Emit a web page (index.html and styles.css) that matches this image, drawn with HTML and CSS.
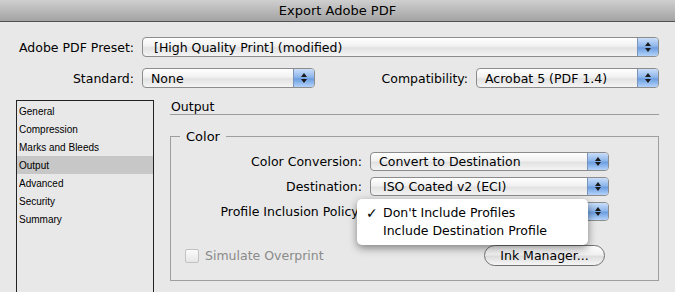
FILE: index.html
```html
<!DOCTYPE html>
<html lang="en">
<head>
  <meta charset="UTF-8" />
  <title>Export Adobe PDF</title>
  <link rel="stylesheet" href="styles.css">
</head>
<body>
  <div class="titlebar">Export Adobe PDF</div>
  <div class="dialog">
    <div class="row preset-row">
      <span class="label">Adobe PDF Preset:</span>
      <div class="popup wide"><span>[High Quality Print] (modified)</span><span class="arrows"></span></div>
    </div>
    <div class="row standard-row">
      <span class="label">Standard:</span>
      <div class="popup standard"><span>None</span><span class="arrows"></span></div>
      <span class="label compat-label">Compatibility:</span>
      <div class="popup compat"><span>Acrobat 5 (PDF 1.4)</span><span class="arrows"></span></div>
    </div>
    <div class="main">
      <ul class="sidebar">
        <li>General</li>
        <li>Compression</li>
        <li>Marks and Bleeds</li>
        <li class="selected">Output</li>
        <li>Advanced</li>
        <li>Security</li>
        <li>Summary</li>
      </ul>
      <div class="content">
        <div class="section-title">Output</div>
        <fieldset class="group">
          <legend>Color</legend>
          <div class="field">
            <span class="flabel">Color Conversion:</span>
            <div class="popup small"><span>Convert to Destination</span><span class="arrows"></span></div>
          </div>
          <div class="field">
            <span class="flabel">Destination:</span>
            <div class="popup small"><span>&nbsp;ISO Coated v2 (ECI)</span><span class="arrows"></span></div>
          </div>
          <div class="field">
            <span class="flabel">Profile Inclusion Policy:</span>
            <div class="popup small"><span></span><span class="arrows"></span></div>
            <div class="menu">
              <div class="menu-item"><span class="check">&#10003;</span>Don't Include Profiles</div>
              <div class="menu-item"><span class="check"></span>Include Destination Profile</div>
            </div>
          </div>
          <div class="bottom-row">
            <label class="checkbox"><span class="box"></span>Simulate Overprint</label>
            <button class="ink-btn">Ink Manager...</button>
          </div>
        </fieldset>
      </div>
    </div>
  </div>
</body>
</html>
```

FILE: styles.css
```css
body {
  margin: 0;
  background: #e8e8e8;
  font-family: "DejaVu Sans", sans-serif;
  font-size: 12.5px;
  color: #000;
  overflow: hidden;
}
.titlebar {
  height: 21px;
  line-height: 22px;
  text-align: center;
  font-size: 13px;
  background: linear-gradient(#cfcfcf, #a3a3a3);
  border-bottom: 1px solid #525252;
}
.dialog {
  padding: 15px 16px 0 0;
}
.row {
  display: flex;
  align-items: center;
  height: 20px;
}
.standard-row {
  margin-top: 11px;
}
.label {
  width: 142px;
  text-align: right;
  padding-right: 8px;
  box-sizing: border-box;
}
.compat-label {
  width: auto;
  margin-left: auto;
}
.popup {
  display: flex;
  align-items: center;
  justify-content: space-between;
  height: 20px;
  box-sizing: border-box;
  border: 1px solid #8c8c8c;
  border-radius: 4px;
  background: linear-gradient(#ffffff, #f1f1f1 45%, #e2e2e2 55%, #f4f4f4);
  padding-left: 8px;
  overflow: hidden;
  white-space: nowrap;
}
.popup.wide { width: 517px; padding-left: 11px; }
.popup.standard { width: 173px; }
.popup.compat { width: 183px; }
.arrows {
  width: 20px;
  flex: none;
  align-self: stretch;
  background: linear-gradient(#c9defa, #8fb6ea 45%, #6c9ee0 55%, #b4d3fb);
  border-left: 1px solid #7a93b8;
  position: relative;
}
.arrows::before,
.arrows::after {
  content: "";
  position: absolute;
  left: 7px;
  border-left: 3px solid transparent;
  border-right: 3px solid transparent;
}
.arrows::before {
  top: 4px;
  border-bottom: 4px solid #1a1a1a;
}
.arrows::after {
  bottom: 4px;
  border-top: 4px solid #1a1a1a;
}
.main {
  display: grid;
  grid-template-columns: 138px 1fr;
  column-gap: 16px;
  margin-top: 12px;
  padding-left: 16px;
}
.sidebar {
  list-style: none;
  margin: 0;
  padding: 1px 0 0;
  height: 200px;
  border: 1px solid #222;
  background: #e8e8e8;
  font-family: "Liberation Sans", sans-serif;
  font-size: 10px;
}
.sidebar li {
  height: 18px;
  line-height: 19px;
  padding-left: 2px;
}
.sidebar li.selected {
  background: #c7c7c7;
}
.section-title {
  height: 14px;
  line-height: 14px;
  border-bottom: 1px solid #9c9c9c;
  padding-left: 1px;
}
.group {
  margin: 14px 0 0;
  padding: 8px 0 0;
  border: 1px solid #9e9e9e;
  height: 152px;
  box-sizing: border-box;
}
.group legend {
  margin-left: 9px;
  padding: 0 6px;
  font-size: 13px;
}
.field {
  display: flex;
  align-items: center;
  height: 18px;
  margin-bottom: 7px;
  position: relative;
}
.flabel {
  width: 199px;
  box-sizing: border-box;
  text-align: right;
  padding-right: 8px;
  white-space: nowrap;
}
.popup.small {
  width: 239px;
  height: 19px;
}
.menu {
  position: absolute;
  left: 186px;
  top: -3px;
  width: 231px;
  padding: 5px 0 5px;
  background: #fff;
  border-radius: 5px;
  box-shadow: 0 3px 9px rgba(0, 0, 0, 0.45);
  z-index: 2;
}
.menu-item {
  height: 18px;
  line-height: 18px;
  display: flex;
}
.check {
  width: 26px;
  box-sizing: border-box;
  padding-left: 9px;
  font-size: 14px;
  font-weight: bold;
}
.bottom-row {
  display: flex;
  align-items: center;
  margin-top: 25px;
  padding-left: 14px;
}
.checkbox {
  display: flex;
  align-items: center;
  color: #8a8a8a;
}
.box {
  width: 12px;
  height: 12px;
  border: 1px solid #c2c2c2;
  border-radius: 2px;
  background: linear-gradient(#fbfbfb, #e6e6e6);
  margin-right: 6px;
}
.ink-btn {
  margin-left: auto;
  margin-right: 53px;
  width: 121px;
  height: 21px;
  font: inherit;
  color: #000;
  border: 1px solid #727272;
  border-radius: 11px;
  background: linear-gradient(#ffffff, #f0f0f0 45%, #dedede 55%, #f5f5f5);
}
```
